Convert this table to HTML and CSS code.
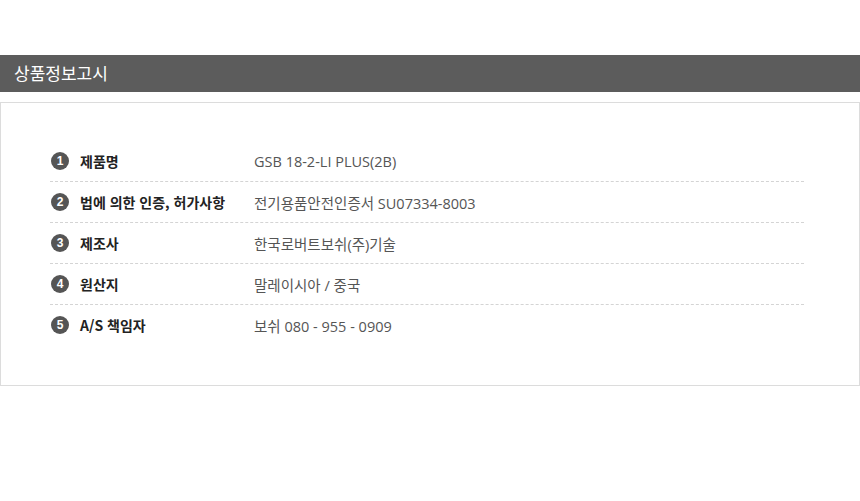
FILE: index.html
```html
<!DOCTYPE html>
<html lang="ko">
<head>
<meta charset="utf-8">
<link rel="stylesheet" href="styles.css">
</head>
<body>
<div class="page">
  <h2 class="title">상품정보고시</h2>
  <div class="box">
    <ul class="info">
      <li class="row"><span class="num">1</span><span class="label">제품명</span><span class="value">GSB 18-2-LI PLUS(2B)</span></li>
      <li class="row"><span class="num">2</span><span class="label">법에 의한 인증, 허가사항</span><span class="value">전기용품안전인증서 SU07334-8003</span></li>
      <li class="row"><span class="num">3</span><span class="label">제조사</span><span class="value">한국로버트보쉬(주)기술</span></li>
      <li class="row"><span class="num">4</span><span class="label">원산지</span><span class="value">말레이시아 / 중국</span></li>
      <li class="row"><span class="num">5</span><span class="label">A/S 책임자</span><span class="value">보쉬 080 - 955 - 0909</span></li>
    </ul>
  </div>
</div>
</body>
</html>
```

FILE: styles.css
```css
html, body {
  margin: 0;
  padding: 0;
  background: #fff;
}
body {
  font-family: "Noto Sans CJK KR", "Noto Sans", sans-serif;
}
.page {
  padding-top: 55px;
}
.title {
  margin: 0;
  height: 37px;
  line-height: 36px;
  background: #5c5c5c;
  color: #fff;
  font-size: 17px;
  font-weight: 400;
  padding-left: 14px;
}
.box {
  margin-top: 10px;
  border: 1px solid #dcdcdc;
  box-sizing: border-box;
  height: 284px;
  padding: 38px 55px 0 49px;
}
.info {
  list-style: none;
  margin: 0;
  padding: 0;
}
.row {
  display: flex;
  align-items: center;
  height: 40px;
  border-bottom: 1px dashed #d4d4d4;
}
.row:last-child {
  border-bottom: none;
}
.num {
  width: 18px;
  height: 18px;
  border-radius: 50%;
  background: #555;
  color: #fff;
  font-family: "Liberation Sans", Arial, sans-serif;
  font-size: 12px;
  font-weight: 700;
  display: flex;
  align-items: center;
  justify-content: center;
  margin-left: 1px;
  flex: none;
}
.label {
  margin-left: 11px;
  width: 174px;
  flex: none;
  font-size: 14px;
  font-weight: 700;
  color: #222;
}
.value {
  font-family: "Open Sans", "Noto Sans CJK KR", sans-serif;
  font-size: 14.5px;
  color: #555;
}
```
